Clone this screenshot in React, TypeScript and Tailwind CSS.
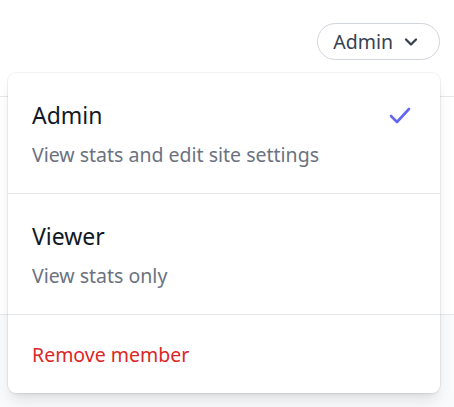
import { ChevronDown } from "lucide-react";

const roles = [
  { name: "Admin", desc: "View stats and edit site settings", active: true },
  { name: "Viewer", desc: "View stats only", active: false },
];

export default function App() {
  return (
    <div className="relative h-[407px] w-full overflow-hidden bg-[#f9fafb] font-['Noto_Sans',sans-serif]">
      <div className="flex h-24 items-start justify-end bg-white pr-[14px] pt-[23px]">
        <button className="flex h-[37px] items-center gap-2 rounded-full border border-gray-300 bg-white pl-[15px] pr-[18px] text-[19.5px] text-[#374151]">
          Admin
          <ChevronDown className="h-5 w-5" strokeWidth={2.8} />
        </button>
      </div>
      <div className="h-[219px] border-y border-gray-200 bg-white" />

      <div className="absolute left-2 top-[73px] w-[432px] rounded-lg bg-white shadow-lg ring-1 ring-black/5">
        {roles.map((r) => (
          <div key={r.name} className="border-b border-gray-200 px-6 pb-[25px] pt-[28px]">
            <div className="flex items-center justify-between">
              <span className="text-[23px] leading-7 text-[#111827]">{r.name}</span>
              {r.active && (
                <svg viewBox="0 0 22 17" className="mr-[5px] h-[17px] w-[22px] text-[#6366f1]" fill="none">
                  <polyline
                    points="2,9 8,15 20,2"
                    stroke="currentColor"
                    strokeWidth={2.6}
                    strokeLinecap="round"
                    strokeLinejoin="round"
                  />
                </svg>
              )}
            </div>
            <p className="mt-3 text-[19.5px] leading-[27px] text-[#6b7280]">{r.desc}</p>
          </div>
        ))}
        <div className="px-6 pb-[25px] pt-[26px] text-[19.5px] leading-[27px] text-[#dc2626]">Remove member</div>
      </div>
    </div>
  );
}
